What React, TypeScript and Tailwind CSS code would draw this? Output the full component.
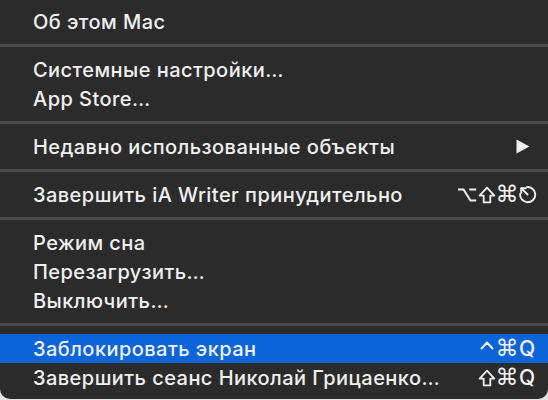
import React from "react";

type Item = {
  label: string;
  keys?: string[];
  submenu?: boolean;
  active?: boolean;
};

const groups: Item[][] = [
  [{ label: "Об этом Mac" }],
  [{ label: "Системные настройки…" }, { label: "App Store…" }],
  [{ label: "Недавно использованные объекты", submenu: true }],
  [{ label: "Завершить iA Writer принудительно", keys: ["opt", "shift", "cmd", "esc"] }],
  [{ label: "Режим сна" }, { label: "Перезагрузить…" }, { label: "Выключить…" }],
  [
    { label: "Заблокировать экран", keys: ["ctrl", "cmd", "Q"], active: true },
    { label: "Завершить сеанс Николай Грицаенко…", keys: ["shift", "cmd", "Q"] },
  ],
];

// outlined shift arrow, the font one is too thin
const ShiftIcon = () => (
  <svg width="18" height="18" viewBox="0 0 18 18" fill="none">
    <path
      d="M9 1.6 L16.4 9.6 H12.3 V16.4 H5.7 V9.6 H1.6 Z"
      stroke="#efefef"
      strokeWidth="1.8"
      strokeLinejoin="round"
    />
  </svg>
);

const CtrlIcon = () => (
  <svg width="14" height="18" viewBox="0 0 14 18" fill="none">
    <path d="M1.5 8.5 L7 2.5 L12.5 8.5" stroke="#efefef" strokeWidth="2" strokeLinecap="round" strokeLinejoin="round" />
  </svg>
);

const OptIcon = () => (
  <svg width="20" height="16" viewBox="0 0 20 16" fill="none">
    <path d="M1 2.5 H6.5 L13.5 13.5 H19.2" stroke="#efefef" strokeWidth="2" />
    <path d="M12.3 2.5 H19.2" stroke="#efefef" strokeWidth="2" />
  </svg>
);

const EscIcon = () => (
  <svg width="19" height="19" viewBox="0 0 20 20" fill="none" stroke="#efefef" strokeWidth="2" strokeLinecap="round" strokeLinejoin="round">
    <path d="M9.5 2.2 A8 8 0 1 1 2.2 9.5" />
    <path d="M10 10 L3.6 3.6" />
    <path d="M3.4 8.2 V3.4 H8.2" />
  </svg>
);

const Key = ({ k }: { k: string }) => {
  let glyph: React.ReactNode = k;
  if (k === "shift") glyph = <ShiftIcon />;
  if (k === "cmd") glyph = "⌘";
  if (k === "opt") glyph = <OptIcon />;
  if (k === "esc") glyph = <EscIcon />;
  if (k === "ctrl") glyph = <CtrlIcon />;
  return (
    <span
      className={`w-[20px] h-[20px] flex items-center justify-center leading-none text-[#efefef] ${
        k === "Q"
          ? "text-[21px] font-['Inter',sans-serif] font-medium"
          : "text-[23px] font-['DejaVu_Sans',sans-serif]"
      }`}
    >
      {glyph}
    </span>
  );
};

const MenuRow = ({ item }: { item: Item }) => (
  <div
    className={`flex items-center h-[29px] pl-[33px] pr-[11px] ${
      item.active ? "bg-[#0b65d9]" : ""
    }`}
  >
    <span className="flex-1 text-[20px] leading-none text-[#f0f0f0] font-['Inter',sans-serif] font-medium tracking-[0.45px]">
      {item.label}
    </span>
    {item.keys && (
      <span className="flex items-center">
        {item.keys.map((k, i) => (
          <Key key={i} k={k} />
        ))}
      </span>
    )}
    {item.submenu && (
      <svg width="14" height="15" viewBox="0 0 14 15" className="mr-[7px]">
        <path d="M0.5 0.5 L13.5 7.5 L0.5 14.5 Z" fill="#efefef" />
      </svg>
    )}
  </div>
);

const App = () => {
  return (
    <div className="w-[548px] h-[400px] bg-[#e4e4e4]">
      <div className="w-full h-[399px] bg-[#2b2b2b] rounded-b-[10px] overflow-hidden pt-[7px]">
        {groups.map((group, gi) => (
          <div key={gi}>
            {gi > 0 && (
              <div className="py-[8px]">
                <div className="h-[3px] bg-[#4b4b4b]" />
              </div>
            )}
            {group.map((item) => (
              <MenuRow key={item.label} item={item} />
            ))}
          </div>
        ))}
      </div>
    </div>
  );
};

export default App;
